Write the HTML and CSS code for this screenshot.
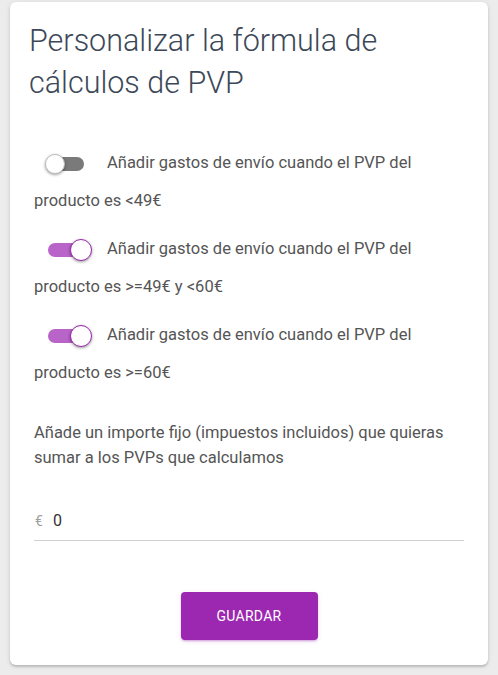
FILE: index.html
```html
<!DOCTYPE html>
<html lang="es">
<head>
<meta charset="utf-8">
<title>Personalizar la fórmula de cálculos de PVP</title>
<link rel="stylesheet" href="styles.css">
</head>
<body>
<div class="card">
  <h2 class="title">Personalizar la fórmula de cálculos de PVP</h2>
  <div class="options">
    <div class="opt"><span class="switch"><span class="knob"></span></span>Añadir gastos de envío cuando el PVP del producto es &lt;49€</div>
    <div class="opt"><span class="switch on"><span class="knob"></span></span>Añadir gastos de envío cuando el PVP del producto es &gt;=49€ y &lt;60€</div>
    <div class="opt"><span class="switch on"><span class="knob"></span></span>Añadir gastos de envío cuando el PVP del producto es &gt;=60€</div>
  </div>
  <p class="para">Añade un importe fijo (impuestos incluidos) que quieras sumar a los PVPs que calculamos</p>
  <div class="field"><span class="prefix">€</span><span class="value">0</span></div>
  <div class="actions"><button class="btn">GUARDAR</button></div>
</div>
</body>
</html>
```
FILE: styles.css
```css
html, body {
  margin: 0;
  padding: 0;
}
body {
  background: #ececec;
  font-family: Roboto, "Liberation Sans", sans-serif;
  width: 498px;
  height: 675px;
  overflow: hidden;
}
.card {
  box-sizing: border-box;
  width: 478px;
  margin: 2px 0 0 10px;
  background: #fff;
  border-radius: 6px;
  box-shadow: 0 2px 2px rgba(0,0,0,0.14), 0 1px 5px rgba(0,0,0,0.12);
  padding: 18px 24px 25px;
}
.title {
  margin: 0 0 0 -5px;
  font-weight: 300;
  font-size: 30.5px;
  line-height: 42px;
  color: #3c4858;
}
.options {
  margin-top: 40px;
}
.opt {
  font-size: 16.5px;
  line-height: 38px;
  color: #555;
  margin-bottom: 10px;
}
.switch {
  display: inline-block;
  position: relative;
  width: 36px;
  height: 14px;
  border-radius: 7px;
  background: #7a7a7a;
  vertical-align: middle;
  margin: 0 23px 0 14px;
}
.knob {
  position: absolute;
  box-sizing: border-box;
  width: 20px;
  height: 20px;
  top: -3px;
  left: -3px;
  border-radius: 50%;
  background: #fff;
  border: 1px solid #bdbdbd;
  box-shadow: 0 1px 3px rgba(0,0,0,0.4);
}
.switch.on {
  background: #b864c8;
}
.switch.on .knob {
  width: 22px;
  height: 22px;
  top: -4px;
  left: 22px;
  border: 1.5px solid #9c27b0;
}
.para {
  margin: 28px 0 0;
  font-size: 16.5px;
  line-height: 25px;
  color: #555;
}
.field {
  display: flex;
  align-items: baseline;
  margin-top: 26px;
  padding: 13px 0 7px;
  border-bottom: 1px solid #d2d2d2;
  line-height: 24px;
}
.prefix {
  font-size: 14px;
  color: #9e9e9e;
  margin: 0 10px 0 1px;
}
.value {
  font-size: 16px;
  color: #333;
}
.actions {
  display: flex;
  justify-content: center;
  margin-top: 51px;
}
.btn {
  width: 137px;
  height: 48px;
  border: none;
  border-radius: 4px;
  background: #9c27b0;
  color: #fff;
  font-family: Roboto, "Liberation Sans", sans-serif;
  font-size: 14px;
  letter-spacing: 0.3px;
  box-shadow: 0 2px 2px rgba(156,39,176,0.14), 0 3px 1px -2px rgba(156,39,176,0.2), 0 1px 5px rgba(156,39,176,0.12);
}
```
